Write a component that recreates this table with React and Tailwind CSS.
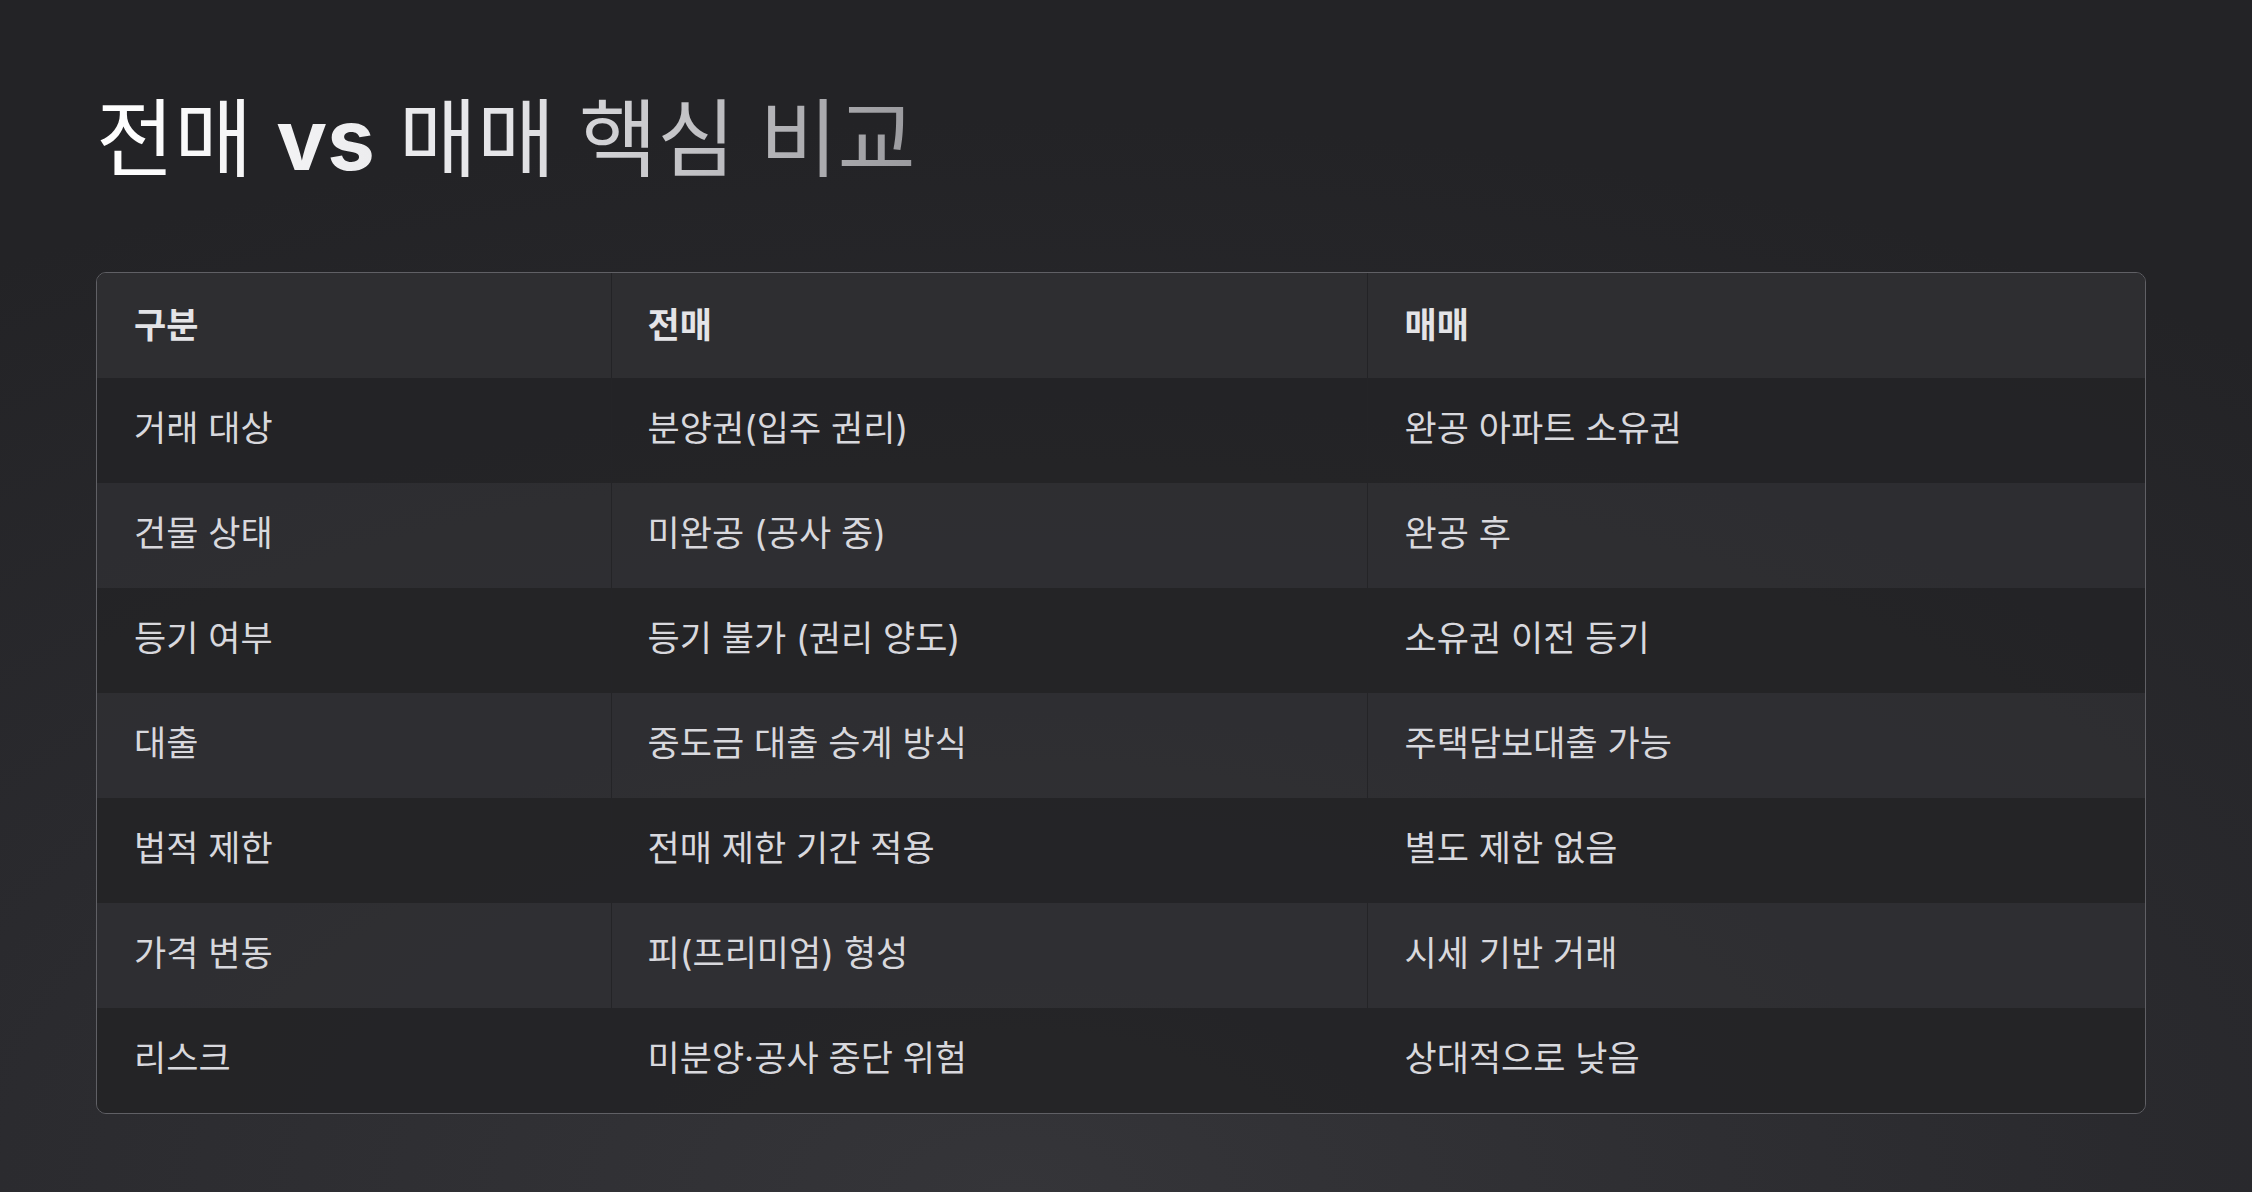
import React from "react";

const rows = [
  ["거래 대상", "분양권(입주 권리)", "완공 아파트 소유권"],
  ["건물 상태", "미완공 (공사 중)", "완공 후"],
  ["등기 여부", "등기 불가 (권리 양도)", "소유권 이전 등기"],
  ["대출", "중도금 대출 승계 방식", "주택담보대출 가능"],
  ["법적 제한", "전매 제한 기간 적용", "별도 제한 없음"],
  ["가격 변동", "피(프리미엄) 형성", "시세 기반 거래"],
  ["리스크", "미분양·공사 중단 위험", "상대적으로 낮음"],
];

export default function App() {
  return (
    <div
      className="min-h-screen w-full bg-[radial-gradient(ellipse_90%_90%_at_45%_100%,#353539_0%,#2a2a2e_55%,#232326_100%)] pl-[96px] pr-[106px] pt-[87px] pb-[79px]"
      style={{ fontFamily: '"Inter", "Noto Sans CJK KR", sans-serif' }}
    >
      <h1 className="inline-block bg-gradient-to-r from-white via-[#e4e4e7] to-[#9a9a9e] bg-clip-text text-[85px] leading-[1.25] text-transparent">
        <span className="font-normal">전매 </span>
        <span className="font-bold">vs</span>
        <span className="font-normal"> 매매 핵심 비교</span>
      </h1>

      <div className="mt-[79px] overflow-hidden rounded-[10px] border border-[#606065]">
        <table className="w-full border-collapse text-[35px]">
          <colgroup>
            <col className="w-[514px]" />
            <col className="w-[756px]" />
            <col />
          </colgroup>
          <thead>
            <tr className="h-[105px] bg-[#2e2e31]">
              <th className="border-r border-[#232326] px-[37px] pb-[2px] text-left font-bold text-[#e4e4e7]">구분</th>
              <th className="border-r border-[#232326] px-[36px] pb-[2px] text-left font-bold text-[#e4e4e7]">전매</th>
              <th className="px-[37px] pb-[2px] text-left font-bold text-[#e4e4e7]">매매</th>
            </tr>
          </thead>
          <tbody>
            {rows.map((r, i) => (
              <tr key={i} className={`h-[105px] ${i % 2 === 0 ? "bg-[#232326]/90" : "bg-[#2f2f33]/80"}`}>
                <td className="border-r border-[#242427] px-[37px] pb-[5px] text-[#d8d8dd]">{r[0]}</td>
                <td className="border-r border-[#242427] px-[36px] pb-[5px] text-[#d8d8dd]">{r[1]}</td>
                <td className="px-[37px] pb-[5px] text-[#d8d8dd]">{r[2]}</td>
              </tr>
            ))}
          </tbody>
        </table>
      </div>
    </div>
  );
}
